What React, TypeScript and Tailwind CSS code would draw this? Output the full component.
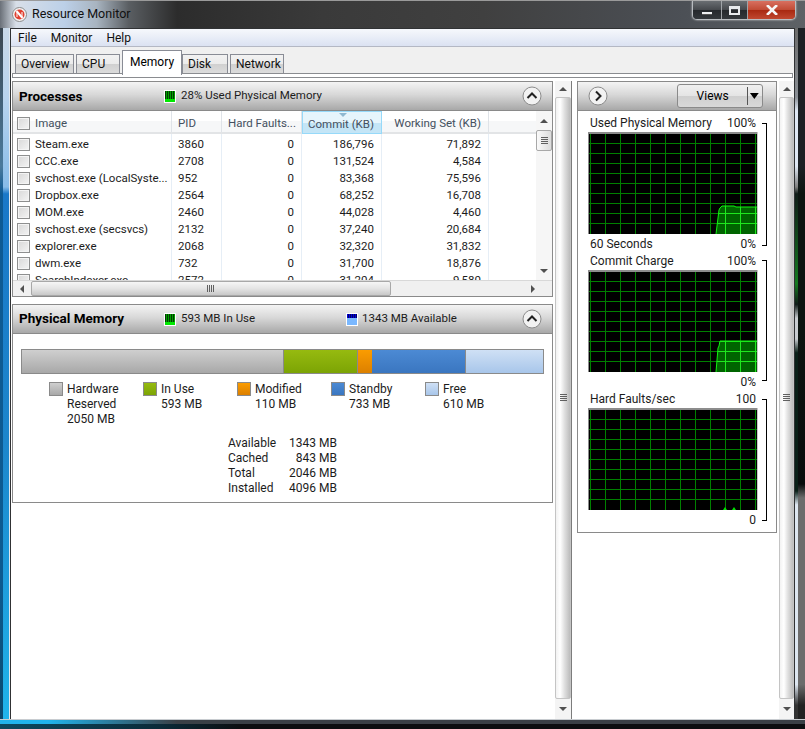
const font = { fontFamily: 'Roboto, sans-serif' };

const rows = [
  ['Steam.exe', '3860', '0', '186,796', '71,892'],
  ['CCC.exe', '2708', '0', '131,524', '4,584'],
  ['svchost.exe (LocalSyste...', '952', '0', '83,368', '75,596'],
  ['Dropbox.exe', '2564', '0', '68,252', '16,708'],
  ['MOM.exe', '2460', '0', '44,028', '4,460'],
  ['svchost.exe (secsvcs)', '2132', '0', '37,240', '20,684'],
  ['explorer.exe', '2068', '0', '32,320', '31,832'],
  ['dwm.exe', '732', '0', '31,700', '18,876'],
  ['SearchIndexer.exe', '2572', '0', '31,204', '9,580'],
];

const legend = [
  { color: 'bg-[linear-gradient(#cfcfcf,#a8a8a8)]', lines: ['Hardware', 'Reserved', '2050 MB'] },
  { color: 'bg-[linear-gradient(#96ba10,#7ca404)]', lines: ['In Use', '593 MB'] },
  { color: 'bg-[linear-gradient(#fb9c00,#dc8000)]', lines: ['Modified', '110 MB'] },
  { color: 'bg-[linear-gradient(#4c8ad4,#3a76c0)]', lines: ['Standby', '733 MB'] },
  { color: 'bg-[linear-gradient(#cfe0f5,#a8c6ea)]', lines: ['Free', '610 MB'] },
];

const summary = [
  ['Available', '1343 MB'],
  ['Cached', '843 MB'],
  ['Total', '2046 MB'],
  ['Installed', '4096 MB'],
];

function Check() {
  return <span className="block w-[13px] h-[13px] border border-[#8e8f8f] bg-[linear-gradient(135deg,#d8d8d8,#f4f4f4)] shadow-[inset_0_0_0_1px_#f4f4f4]" />;
}

function Chevron({ dir }: { dir: 'up' | 'right' }) {
  return (
    <svg width="20" height="20" viewBox="0 0 20 20" className="shrink-0">
      <circle cx="10" cy="10" r="9" fill="#f2f2f2" stroke="#8c8c8c" />
      <path d={dir === 'up' ? 'M5.5 12 L10 7.5 L14.500 12' : 'M8 5.500 L12.500 10 L8 14.500'} fill="none" stroke="#222" strokeWidth="2" />
    </svg>
  );
}

function Meter({ kind }: { kind: 'green' | 'blue' }) {
  if (kind === 'blue') {
    return (
      <span className="block w-[12px] h-[13px] border border-white bg-[#7ab8ff] shrink-0">
        <span className="block h-[4px] bg-[repeating-linear-gradient(90deg,#0000d8_0_1px,#000060_1px_2px)]" />
      </span>
    );
  }
  return (
    <span className="block w-[12px] h-[13px] border border-white bg-[#00e800] shrink-0">
      <span className="block h-[8px] bg-[repeating-linear-gradient(90deg,#003c00_0_1px,#00a000_1px_2px)]" />
    </span>
  );
}

function Arrow({ dir }: { dir: 'up' | 'down' | 'left' | 'right' }) {
  const d = { up: 'M4 0 L8 4 L0 4 Z', down: 'M0 0 L8 0 L4 4 Z', left: 'M4 0 L4 8 L0 4 Z', right: 'M0 0 L4 4 L0 8 Z' }[dir];
  const vertical = dir === 'up' || dir === 'down';
  return (
    <svg width={vertical ? 8 : 4} height={vertical ? 4 : 8} viewBox={vertical ? '0 0 8 4' : '0 0 4 8'}>
      <path d={d} fill="#505050" />
    </svg>
  );
}

function Grip({ vertical }: { vertical: boolean }) {
  const lines = [0, 2, 4, 6];
  return (
    <svg width={vertical ? 7 : 8} height={vertical ? 8 : 7} viewBox={vertical ? '0 0 7 8' : '0 0 8 7'}>
      {lines.map((p) =>
        vertical ? (
          <rect key={p} x="0" y={p} width="7" height="1" fill="#606060" />
        ) : (
          <rect key={p} x={p} y="0" width="1" height="7" fill="#606060" />
        ),
      )}
    </svg>
  );
}

// the big scrollbars beside each column
function TallScroll({ width }: { width: string }) {
  return (
    <div className={`${width} shrink-0 h-full flex flex-col bg-[#f4f4f4]`}>
      <div className="h-[16px] flex items-center justify-center"><Arrow dir="up" /></div>
      <div className="flex-1 rounded-[2px] border border-[#c4c4c4] bg-[linear-gradient(90deg,#f2f2f2,#ffffff_30%,#e0e0e0_60%,#bcbcbc)] flex items-center justify-center">
        <Grip vertical />
      </div>
      <div className="h-[20px] flex items-center justify-center"><Arrow dir="down" /></div>
    </div>
  );
}

function PanelHeader({ children }: { children: React.ReactNode }) {
  return (
    <div className="h-[29px] shrink-0 flex items-center border-b border-[#8a8a8a] bg-[linear-gradient(#f4f4f4,#d8d8d8_45%,#a8a8a8)]">
      {children}
    </div>
  );
}

function TableCells({ row, className }: { row: string[]; className: string }) {
  const line = 'border-r border-[#e6eef6]';
  return (
    <div className={`flex ${className}`}>
      <div className={`w-[159px] pl-[22px] whitespace-nowrap overflow-hidden ${line}`}>{row[0]}</div>
      <div className={`w-[50px] pl-[6px] ${line}`}>{row[1]}</div>
      <div className={`w-[80px] pr-[7px] text-right ${line}`}>{row[2]}</div>
      <div className={`w-[80px] pr-[7px] text-right ${line}`}>{row[3]}</div>
      <div className={`w-[107px] pr-[7px] text-right ${line}`}>{row[4]}</div>
    </div>
  );
}

function ProcessTable() {
  const head = 'h-full flex items-center pt-[3px] border-r border-[#dfe3e8]';
  return (
    <div className="flex h-[169px]">
      <div className="w-[523px] h-full overflow-hidden text-[11.5px] leading-[15px] text-[#1c1c1c]">
        <div className="h-[23px] flex text-[#44505e] border-b-2 border-[#e2e4e6] bg-[linear-gradient(#ffffff_50%,#f6f7f8_50%)]">
          <div className={`${head} w-[159px] pl-[22px]`}>Image</div>
          <div className={`${head} w-[50px] pl-[6px]`}>PID</div>
          <div className={`${head} w-[80px] pl-[6px] whitespace-nowrap`}>Hard Faults...</div>
          <div className="relative h-[23px] w-[80px] flex items-center justify-end pr-[7px] pt-[3px] border border-[#96d9f9] bg-[linear-gradient(#e6f5fc_50%,#c4e5f6_50%)]">
            Commit (KB)
            <svg width="8" height="4" viewBox="0 0 8 4" className="absolute top-[1px] left-[36px]"><path d="M0 0 L8 0 L4 4 Z" fill="#8fb8d0" /></svg>
          </div>
          <div className={`${head} w-[107px] justify-end pr-[7px]`}>Working Set (KB)</div>
        </div>
        <TableCells row={['', '', '', '', '']} className="h-[3px]" />
        {rows.map((r) => (
          <div key={r[0]} className="relative">
            <span className="absolute left-[4px] top-[1px]"><Check /></span>
            <TableCells row={r} className="h-[17px]" />
          </div>
        ))}
      </div>
      <div className="w-[16px] h-full flex flex-col bg-[#f6f6f6]">
        <div className="h-[19px] flex items-center justify-center"><Arrow dir="up" /></div>
        <div className="h-[21px] rounded-[2px] border border-[#a8a8a8] bg-[linear-gradient(90deg,#fafafa,#dcdcdc)] flex items-center justify-center"><Grip vertical /></div>
        <div className="flex-1" />
        <div className="h-[19px] flex items-center justify-center"><Arrow dir="down" /></div>
      </div>
    </div>
  );
}

function ProcessesPanel() {
  return (
    <div className="h-[216px] flex flex-col border border-[#8a8a8a] bg-white">
      <PanelHeader>
        <div className="w-[151px] pl-[6px] font-bold text-[13.5px] text-black">Processes</div>
        <Meter kind="green" />
        <div className="ml-[5px] text-[11.5px] text-[#1c1c1c]">28% Used Physical Memory</div>
        <div className="flex-1" />
        <div className="mr-[10px]"><Chevron dir="up" /></div>
      </PanelHeader>
      <div className="relative">
        <ProcessTable />
        <span className="absolute left-[4px] top-[6px]"><Check /></span>
      </div>
      <div className="h-[16px] flex items-center bg-[#f0f0f0] border-t border-[#d8d8d8]">
        <div className="w-[18px] flex justify-center"><Arrow dir="left" /></div>
        <div className="w-[360px] h-full rounded-[2px] border border-[#a8a8a8] bg-[linear-gradient(#f6f6f6,#e4e4e4_50%,#c8c8c8)] flex items-center justify-center"><Grip vertical={false} /></div>
        <div className="flex-1" />
        <div className="w-[38px] flex justify-center"><Arrow dir="right" /></div>
      </div>
    </div>
  );
}

function MemoryPanel() {
  return (
    <div className="h-[199px] flex flex-col border border-[#8a8a8a] bg-white text-[12px] text-[#1c1c1c]">
      <PanelHeader>
        <div className="w-[151px] pl-[6px] pb-[1px] font-bold text-[13.5px] text-black">Physical Memory</div>
        <Meter kind="green" />
        <div className="ml-[5px] w-[165px] text-[11.5px]">593 MB In Use</div>
        <Meter kind="blue" />
        <div className="ml-[4px] text-[11.5px]">1343 MB Available</div>
        <div className="flex-1" />
        <div className="mr-[10px]"><Chevron dir="up" /></div>
      </PanelHeader>
      <div className="pt-[15px] px-[8px]">
        <div className="flex h-[25px] w-[523px] border border-[#8a8a8a]">
          <div className="w-[262px] bg-[linear-gradient(#cfcfcf,#a8a8a8)] border-r border-[#8a8a8a]" />
          <div className="w-[74px] bg-[linear-gradient(#96ba10,#7ca404)] border-r border-[#8a8a8a]" />
          <div className="w-[14px] bg-[linear-gradient(#fb9c00,#dc8000)]" />
          <div className="w-[94px] bg-[linear-gradient(#4c8ad4,#3a76c0)] border-r border-[#8a8a8a]" />
          <div className="flex-1 bg-[linear-gradient(#cfe0f5,#a8c6ea)]" />
        </div>
        <div className="mt-[8px] ml-[28px] flex h-[45px] leading-[15px]">
          {legend.map((item) => (
            <div key={item.lines[0]} className="w-[94px] flex">
              <span className={`block w-[14px] h-[14px] border border-[#8a8a8a] ${item.color}`} />
              <div className="ml-[4px]">
                {item.lines.map((l) => <div key={l}>{l}</div>)}
              </div>
            </div>
          ))}
        </div>
        <div className="mt-[9px] ml-[207px] w-[109px] leading-[15px]">
          {summary.map(([k, v]) => (
            <div key={k} className="flex justify-between"><span>{k}</span><span>{v}</span></div>
          ))}
        </div>
      </div>
    </div>
  );
}

function Graph({ id, points, blips }: { id: string; points?: string; blips?: number[] }) {
  const vs = Array.from({ length: 12 }, (_, i) => 2.5 + i * 15);
  const hs = Array.from({ length: 9 }, (_, i) => 11.5 + i * 10);
  const grid = (color: string) => (
    <>
      {vs.map((x) => <line key={x} x1={x} y1="2" x2={x} y2="102" stroke={color} />)}
      {hs.map((y) => <line key={y} x1="1" y1={y} x2="170" y2={y} stroke={color} />)}
    </>
  );
  return (
    <svg width="170" height="102" viewBox="0 0 170 102" className="block">
      <rect width="170" height="102" fill="#000" />
      {grid('#008000')}
      {points && (
        <>
          <clipPath id={id}><polygon points={points} /></clipPath>
          <polygon points={points} fill="#006400" />
          <g clipPath={`url(#${id})`}>{grid('#1ee81e')}</g>
          <polyline points={points} fill="none" stroke="#12f012" strokeWidth="1" />
        </>
      )}
      {blips?.map((x) => <path key={x} d={`M${x - 2} 102 L${x} 99 L${x + 2} 102 Z`} fill="#00e000" />)}
      <rect width="170" height="2" fill="#8c8c8c" />
      <rect width="1" height="102" fill="#8c8c8c" />
      <rect x="169" width="1" height="102" fill="#c8c8c8" />
    </svg>
  );
}

function GraphBlock({ label, top, bottom, left, id, points, blips, bracketTop, bracketBottom }: {
  label: string; top: string; bottom: string; left?: string; id: string; points?: string; blips?: number[]; bracketTop: string; bracketBottom: string;
}) {
  return (
    <div className="flex h-[138px]">
      <div className="w-[170px] ml-[10px]">
        <div className="h-[18px] flex justify-between px-[2px] leading-[19px]"><span>{label}</span><span>{top}</span></div>
        <Graph id={id} points={points} blips={blips} />
        <div className="h-[18px] flex justify-between px-[2px] leading-[21px]"><span>{left}</span><span>{bottom}</span></div>
      </div>
      <div className={`w-[5px] ml-[4px] border-t border-r border-b border-black ${bracketTop} ${bracketBottom}`} />
    </div>
  );
}

function ViewsPanel() {
  return (
    <div className="h-[452px] w-[200px] flex flex-col border border-[#8a8a8a] bg-white text-[12px] text-[#1c1c1c]">
      <PanelHeader>
        <div className="ml-[10px]"><Chevron dir="right" /></div>
        <div className="flex-1" />
        <div className="mr-[13px] h-[24px] w-[86px] flex items-center rounded-[3px] border border-[#8a8a8a] bg-[linear-gradient(#f0f0f0,#e4e4e4_50%,#cfcfcf_50%,#d8d8d8)]">
          <span className="w-[71px] text-center text-black">Views</span>
          <span className="block w-px h-[18px] bg-[#555]" />
          <svg width="14" height="6" viewBox="0 0 14 6"><path d="M2 0 L11 0 L6.500 6 Z" fill="#000" /></svg>
        </div>
      </PanelHeader>
      <div className="pt-[3px]">
        <GraphBlock label="Used Physical Memory" top="100%" bottom="0%" left="60 Seconds" id="g1" points="128,102 131,78 132,76 134,74 146,74 148,75 170,75 170,102" bracketTop="mt-[9px]" bracketBottom="mb-[6px]" />
        <GraphBlock label="Commit Charge" top="100%" bottom="0%" id="g2" points="128,102 130,78 131,76 132,71 170,71 170,102" bracketTop="mt-[8px]" bracketBottom="mb-[9px]" />
        <GraphBlock label="Hard Faults/sec" top="100" bottom="0" id="g3" blips={[137, 146]} bracketTop="mt-[9px]" bracketBottom="mb-[7px]" />
      </div>
    </div>
  );
}

function CaptionButtons() {
  return (
    <div className="flex h-[19px] self-start mr-[9px] rounded-b-[5px] border border-t-0 border-[#b8bcc0] overflow-hidden shadow-[0_0_2px_#ddd]">
      <div className="w-[29px] flex items-center justify-center border-r border-[#a0a4a8] bg-[linear-gradient(#6a6e72,#45484c_50%,#25282c_50%,#34383c)]">
        <span className="block mt-[6px] w-[10px] h-[3px] bg-[#eef0f2] border-b border-[#555]" />
      </div>
      <div className="w-[26px] flex items-center justify-center border-r border-[#a0a4a8] bg-[linear-gradient(#6a6e72,#45484c_50%,#25282c_50%,#34383c)]">
        <span className="block w-[11px] h-[9px] border-2 border-t-[3px] border-[#e8eaec]" />
      </div>
      <div className="w-[47px] flex items-center justify-center bg-[linear-gradient(#d87060,#c04a34_50%,#a82810_50%,#c04830)]">
        <svg width="12" height="10" viewBox="0 0 12 10"><path d="M1 0 L11 10 M11 0 L1 10" stroke="#f6f6f6" strokeWidth="2.600" /></svg>
      </div>
    </div>
  );
}

export default function App() {
  const tab = 'h-[19px] flex items-center pl-[5px] border border-b-0 border-[#898c95] bg-[linear-gradient(#f2f2f2,#ebebeb_50%,#d0d0d0_50%,#dcdcdc)]';
  return (
    <div style={font} className="w-[805px] h-[729px] flex flex-col overflow-hidden bg-[#2a2c2e] text-[12px] text-black">
      <div className="h-[28px] shrink-0 flex items-stretch border-t border-[#9a9a9a] bg-[linear-gradient(90deg,#6a7078,#d8dfe8_2%,#bcd0e8_8%,#a8b4c0_12%,#5a5e62_16%,#2c2c2c_22%,#3a3a3a_40%,#404040_60%,#4c5056_85%,#5e6266)]">
        <div className="pl-[12px] pt-[6px] flex items-start">
          <svg width="15" height="15" viewBox="0 0 15 15">
            <circle cx="7.500" cy="7.500" r="7" fill="#f4f4f4" stroke="#8a8a8a" />
            <circle cx="7.500" cy="7.500" r="5" fill="#e04030" />
            <path d="M4.500 4 L10.500 11" stroke="#fff" strokeWidth="2" />
            <path d="M5 10 L5 5 M10 10 L10 5" stroke="#fff" strokeWidth="1" />
          </svg>
        </div>
        <div className="ml-[5px] pt-[5px] text-[12.5px] leading-[16px] text-[#111]">Resource Monitor</div>
        <div className="flex-1" />
        <CaptionButtons />
      </div>

      <div className="flex-1 flex min-h-0">
        <div className="w-[10px] shrink-0 flex border-r border-[#dfe8f0]">
          <div className="w-[3px] bg-[linear-gradient(#3a4650,#4a7a9c_20%,#0e5a94_24%,#0c5a90_80%,#0a4a70)]" />
          <div className="flex-1 bg-[linear-gradient(#c8d8e8,#b8d4ee_10%,#88bce8_23%,#1a78c8_24%,#1c86cc_60%,#20b4ec)]" />
        </div>
        <div className="w-[785px] shrink-0 flex flex-col border border-b-0 border-[#303234] bg-white">
          <div className="h-[18px] shrink-0 flex items-center gap-[14px] pl-[7px] pt-[1px] text-[#111] bg-[linear-gradient(#f6f8fc,#dbe2f2)] border-b border-[#b4b8c4]">
            <span>File</span>
            <span>Monitor</span>
            <span>Help</span>
          </div>
          <div className="h-[26px] shrink-0 flex items-end gap-[2px] pl-[4px] bg-[#f0f0f0] text-[#111]">
            <div className={`${tab} w-[59px]`}>Overview</div>
            <div className={`${tab} w-[44px]`}>CPU</div>
            <div className="relative z-10 -mb-[2px] -mr-[2px] h-[25px] w-[60px] flex items-center pl-[7px] pb-[2px] border border-b-0 border-[#898c95] bg-white text-black">Memory</div>
            <div className={`${tab} w-[46px]`}>Disk</div>
            <div className={`${tab} w-[54px]`}>Network</div>
          </div>
          <div className="h-[5px] shrink-0 ml-[1px] w-[781px] border border-[#8a8c90] bg-white" />
          <div className="h-[3px] shrink-0" />
          <div className="flex-1 min-h-0 flex">
            <div className="w-[541px] shrink-0 ml-[1px] flex flex-col gap-[7px]">
              <ProcessesPanel />
              <MemoryPanel />
            </div>
            <div className="ml-[2px]"><TallScroll width="w-[16px]" /></div>
            <div className="w-px h-full bg-[#7c7c7c]" />
            <div className="ml-[5px]"><ViewsPanel /></div>
            <div className="ml-[2px]"><TallScroll width="w-[15px]" /></div>
          </div>
        </div>
        <div className="flex-1 flex">
          <div className="w-[3px] bg-[linear-gradient(#6a6a6a,#8a8f95_10%,#dfe8f4_12%,#dfe8f4_20%,#808080_23%,#101c18_24%,#157a20_37%,#101c18_40%,#c8ccd0_42%,#c8ccd0_45%,#0a2018_47%,#0a2018_67%,#dde6f0_69%,#dde6f0_95%,#333333_98%)]" />
          <div className="flex-1 bg-[linear-gradient(#1c2024,#1c2024_20%,#0c1410_24%,#0c1410_44%,#080c0c_66%,#6c6c6c_68%,#6c6c6c_95%,#222222_98%)]" />
        </div>
      </div>

      <div className="h-[10px] shrink-0 flex flex-col bg-[linear-gradient(90deg,#20b4ec_0,#20b4ec_6%,#3a4046_22%,#3a4046_100%)]">
        <div className="h-px bg-[#c8ccd0]" />
        <div className="h-[4px]" />
        <div className="flex-1 bg-[linear-gradient(90deg,#0c4a60,#0a2a38_20%,#0c0e10_30%)]" />
      </div>
    </div>
  );
}
